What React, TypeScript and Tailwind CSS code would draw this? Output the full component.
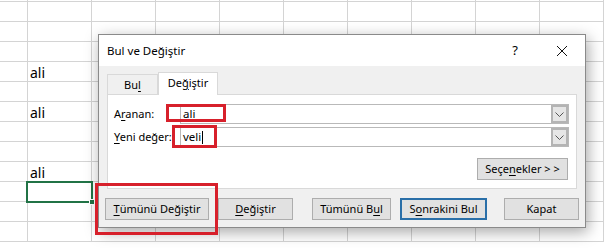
const COLS = 10
const ROWS = 13

const cellText: Record<number, string> = { 4: 'ali', 6: 'ali', 9: 'ali' }

function Sheet() {
  return (
    <div className="-mt-[18px] flex flex-col">
      {Array.from({ length: ROWS }).map((_, r) => (
        <div key={r} className="flex">
          {Array.from({ length: COLS }).map((_, c) => (
            <div
              key={c}
              className={`box-border h-[20px] shrink-0 border-b border-r border-[#d4d4d4] ${c === 0 ? 'w-[28px]' : 'w-[64px]'}`}
            >
              {c === 1 && cellText[r] && (
                <span className="block pl-[2px] pt-[2px] text-[14px] leading-[18px] text-black">{cellText[r]}</span>
              )}
            </div>
          ))}
        </div>
      ))}
    </div>
  )
}

function U({ children }: { children: string }) {
  return <span className="underline underline-offset-2 decoration-1">{children}</span>
}

function Btn({ w, primary, children }: { w: string; primary?: boolean; children: React.ReactNode }) {
  return (
    <div
      className={`flex h-[22px] shrink-0 items-center justify-center bg-[#e1e1e1] ${w} ${
        primary ? 'border-2 border-[#2a6fa8]' : 'border border-[#adadad]'
      }`}
    >
      {children}
    </div>
  )
}

function Chevron() {
  return (
    <div className="flex h-full w-[17px] items-center justify-center border-2 border-[#b4b4b4] bg-[#e6e6e6]">
      <svg width="9" height="5" viewBox="0 0 9 5">
        <path d="M0.5 0.5 L4.5 4.5 L8.5 0.5" fill="none" stroke="#555" strokeWidth="1" />
      </svg>
    </div>
  )
}

function Combo({ value, caret }: { value: string; caret?: boolean }) {
  return (
    <div className="flex h-[20px] w-[389px] items-center border border-[#b9b9b9] bg-white">
      <div className="flex flex-1 items-center pl-[2px] text-[11.5px]">
        {value}
        {caret && <span className="ml-[1px] inline-block h-[13px] w-[1px] bg-black" />}
      </div>
      <Chevron />
    </div>
  )
}

function Dialog() {
  return (
    <div className="absolute left-[98px] top-[34px] flex h-[194px] w-[488px] flex-col border border-[#8a8a8a] bg-[#f0f0f0] text-[11px] shadow-[2px_4px_14px_rgba(0,0,0,0.35)]">
      <div className="flex h-[31px] items-center bg-white pl-[8px] text-[11.5px] text-black">
        <span className="flex-1">Bul ve Değiştir</span>
        <span className="mr-[38px] text-[13px]">?</span>
        <svg width="12" height="12" viewBox="0 0 12 12" className="mr-[17px]">
          <path d="M1 1 L11 11 M11 1 L1 11" stroke="#111" strokeWidth="1" />
        </svg>
      </div>

      <div className="flex items-end pl-[8px] pt-[6px]">
        <div className="flex h-[20px] w-[51px] items-center justify-center border border-b-0 border-[#d9d9d9] pt-[2px]">
          Bu<U>l</U>
        </div>
        <div className="-mb-px relative z-10 flex h-[23px] w-[60px] items-center justify-center border border-b-0 border-[#d9d9d9] bg-white pb-[2px]">
          De<U>ğ</U>iştir
        </div>
      </div>

      <div className="ml-[8px] flex h-[95px] w-[470px] flex-col border border-[#d9d9d9] bg-white pl-[6px] pt-[9px]">
        <div className="flex items-center">
          <span className="w-[66px]">
            A<U>r</U>anan:
          </span>
          <Combo value="ali" />
        </div>
        <div className="mt-[3px] flex items-center">
          <span className="w-[66px]">
            <U>Y</U>eni değer:
          </span>
          <Combo value="veli" caret />
        </div>
        <div className="mt-[11px] flex justify-end pr-[8px]">
          <Btn w="w-[91px]">
            Seçe<U>n</U>ekler &gt; &gt;
          </Btn>
        </div>
      </div>

      <div className="mt-[9px] flex pl-[6px]">
        <Btn w="w-[104px]">
          <U>T</U>ümünü Değiştir
        </Btn>
        <div className="ml-[9px]">
          <Btn w="w-[75px]">
            <U>D</U>eğiştir
          </Btn>
        </div>
        <div className="ml-[19px]">
          <Btn w="w-[79px]">
            Tümünü B<U>u</U>l
          </Btn>
        </div>
        <div className="ml-[9px]">
          <Btn w="w-[87px]" primary>
            S<U>o</U>nrakini Bul
          </Btn>
        </div>
        <div className="ml-[17px]">
          <Btn w="w-[75px]">Kapat</Btn>
        </div>
      </div>
    </div>
  )
}

export default function App() {
  return (
    <div
      className="relative h-[248px] w-[609px] overflow-hidden bg-white text-black"
      style={{ fontFamily: '"Noto Sans", "Open Sans", sans-serif' }}
    >
      <Sheet />
      {/* active cell */}
      <div className="absolute left-[26px] top-[181px] h-[22px] w-[67px] border-2 border-[#217346]" />
      <div className="absolute left-[89px] top-[199px] h-[6px] w-[6px] border border-white bg-[#217346]" />

      <Dialog />

      {/* red annotation boxes */}
      <div className="absolute left-[166px] top-[104px] h-[18px] w-[60px] border-[3px] border-[#d7202b]" />
      <div className="absolute left-[172px] top-[125px] h-[23px] w-[45px] border-[3px] border-[#d7202b]" />
      <div className="absolute left-[95px] top-[183px] h-[52px] w-[123px] border-[3px] border-[#d7202b]" />
    </div>
  )
}
